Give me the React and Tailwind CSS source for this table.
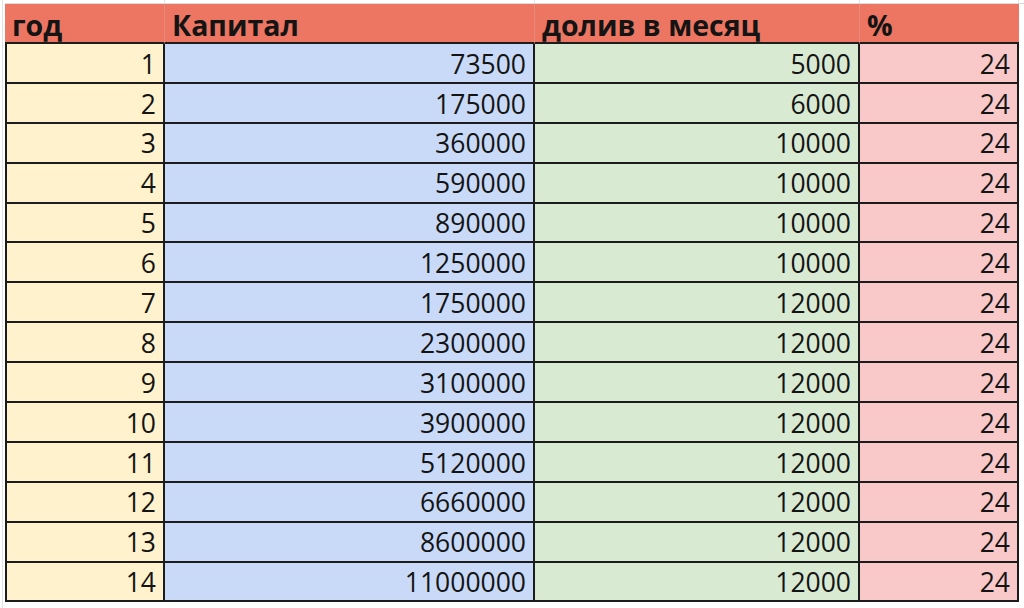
const rows = [
  [1, 73500, 5000, 24],
  [2, 175000, 6000, 24],
  [3, 360000, 10000, 24],
  [4, 590000, 10000, 24],
  [5, 890000, 10000, 24],
  [6, 1250000, 10000, 24],
  [7, 1750000, 12000, 24],
  [8, 2300000, 12000, 24],
  [9, 3100000, 12000, 24],
  [10, 3900000, 12000, 24],
  [11, 5120000, 12000, 24],
  [12, 6660000, 12000, 24],
  [13, 8600000, 12000, 24],
  [14, 11000000, 12000, 24],
];

const colBg = ["bg-[#fff2cc]", "bg-[#c9daf8]", "bg-[#d9ead3]", "bg-[#f9c9c9]"];
const headers = ["год", "Капитал", "долив в месяц", "%"];

export default function App() {
  return (
    <div className="w-[1024px] h-[608px] bg-white overflow-hidden font-['Open_Sans',sans-serif] text-[#141414]">
      <div className="ml-[2px] border-l border-[#e3e3e3] pl-[2px] h-full">
        {/* sheet gridline strip above the table */}
        <div className="grid grid-cols-[160px_370px_325px_159px] h-[4px] border-b border-[#dcdcdc]">
          <div className="border-r border-[#e3e3e3]" />
          <div className="border-r border-[#e3e3e3]" />
          <div className="border-r border-[#e3e3e3]" />
          <div className="border-r border-[#e3e3e3]" />
        </div>

        <div className="grid grid-cols-[160px_370px_325px_159px] w-[1014px]">
          {/* header */}
          {headers.map((h, i) => (
            <div
              key={h}
              className={`h-[40px] bg-[#ec7662] border-b-2 border-[#1c1c1c] flex items-center pl-[7px] pt-[4px] text-[28.5px] font-bold leading-none ${
                i < 3 ? "border-r border-r-[#e58a79]" : ""
              }`}
            >
              {h}
            </div>
          ))}

          {/* body */}
          {rows.map((r) =>
            r.map((v, i) => (
              <div
                key={`${r[0]}-${i}`}
                className={`h-[39.9px] ${colBg[i]} border-b-2 border-r-2 border-[#1c1c1c] ${
                  i === 0 ? "border-l-2" : ""
                } flex items-center justify-end pr-[7px] pt-[2px] text-[26.5px] leading-none`}
              >
                {v}
              </div>
            ))
          )}
        </div>
      </div>
    </div>
  );
}
